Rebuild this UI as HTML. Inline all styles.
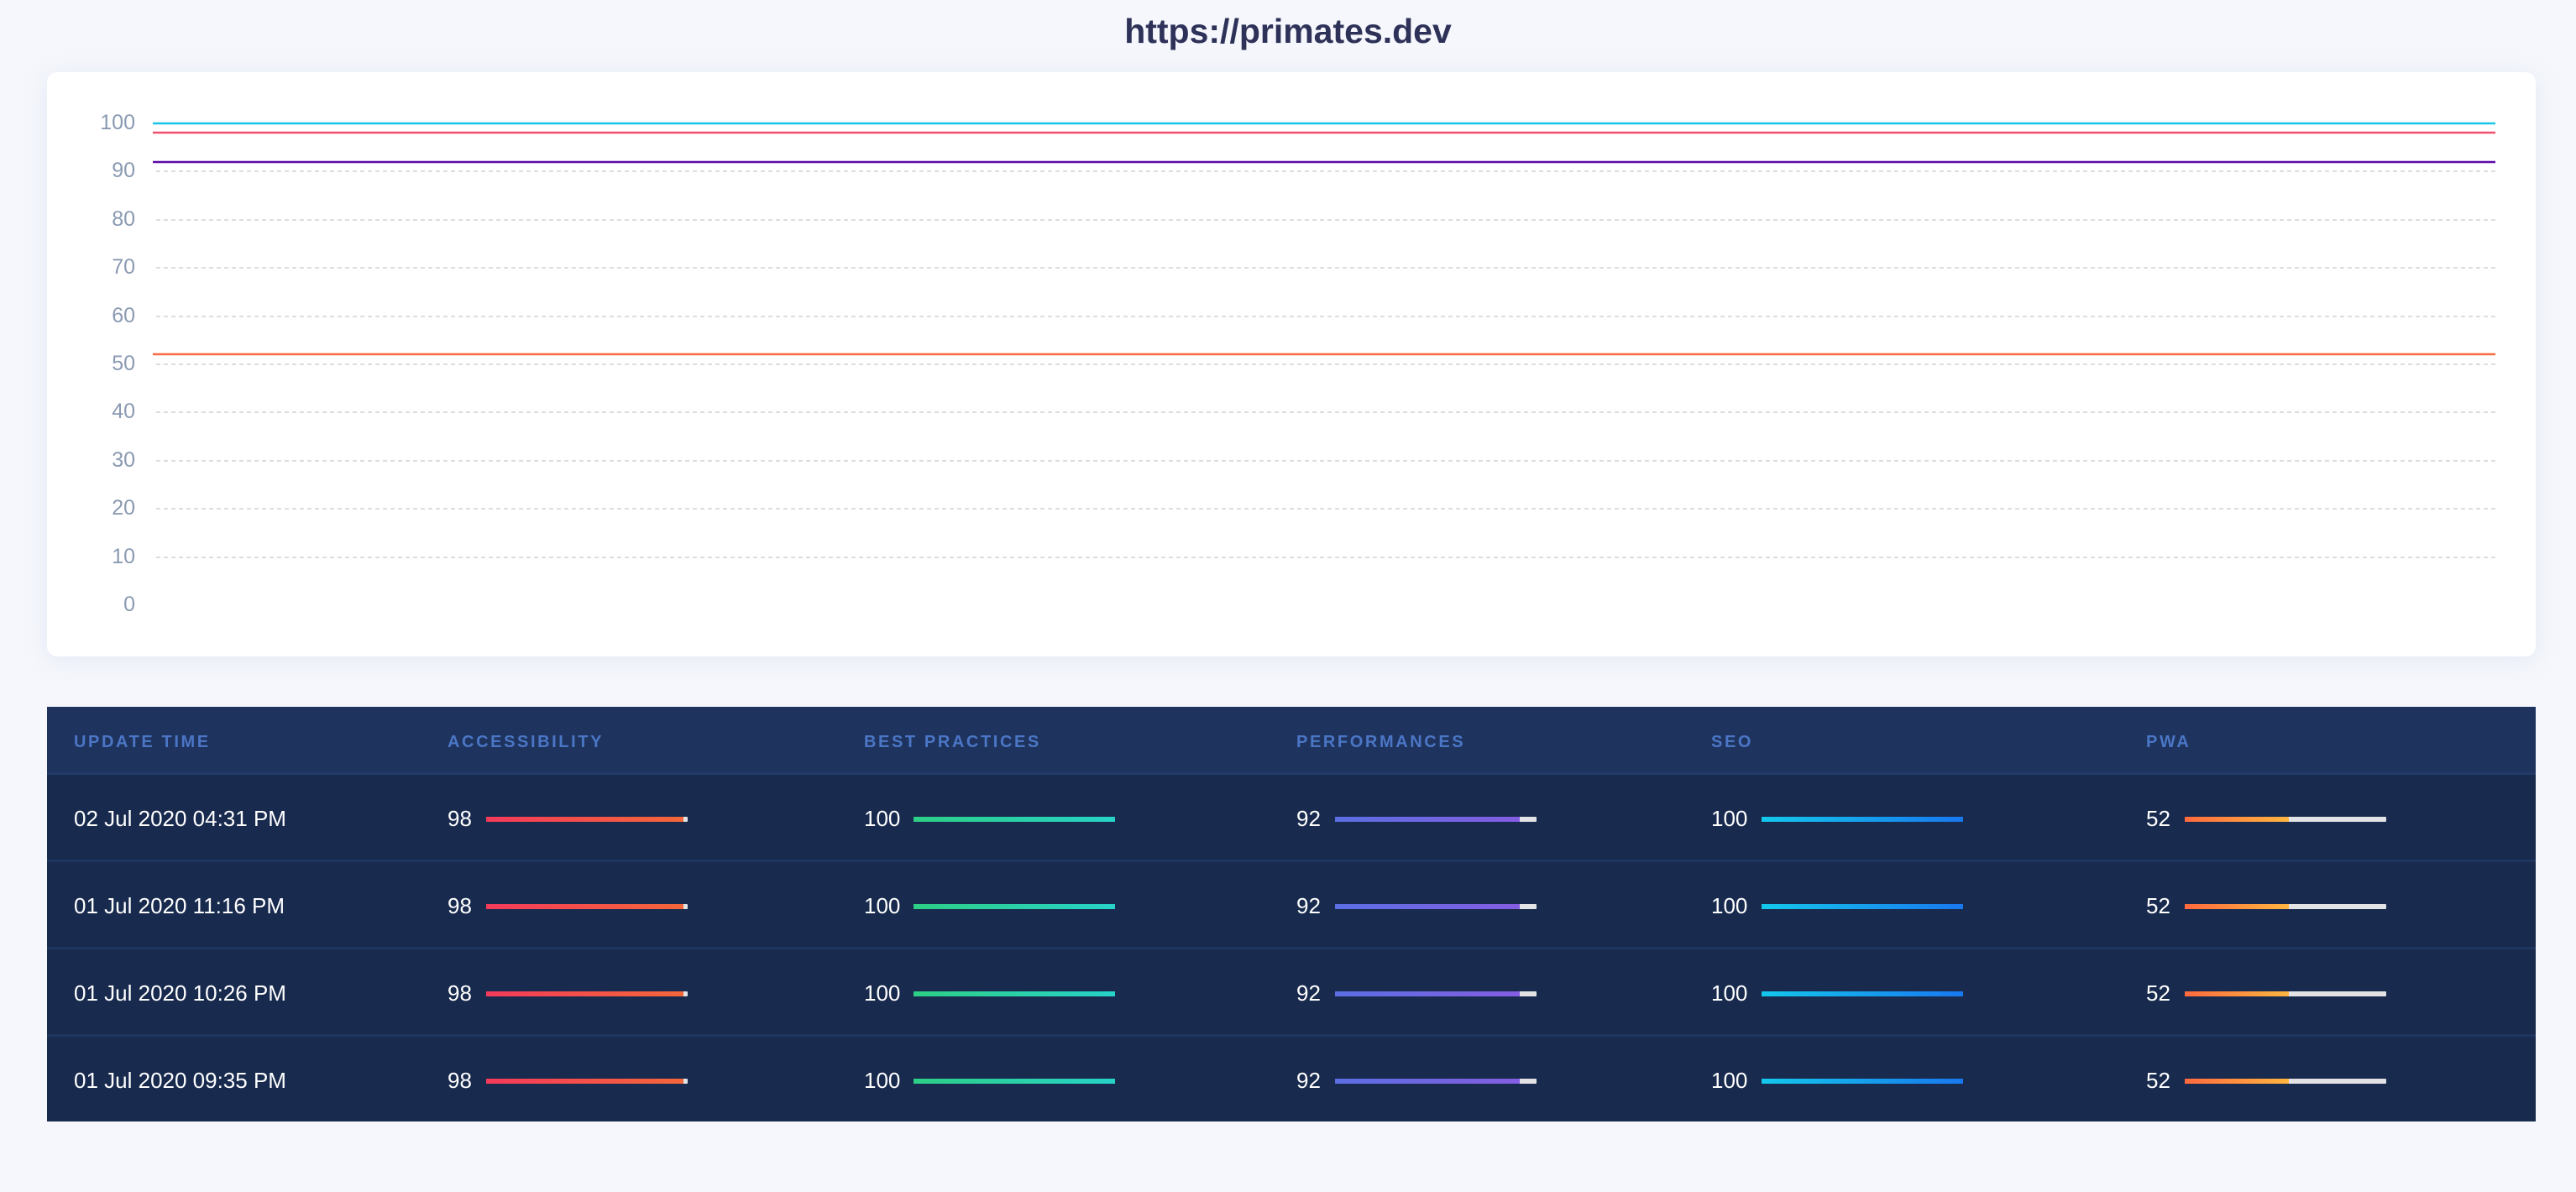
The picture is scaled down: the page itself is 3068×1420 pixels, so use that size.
<!DOCTYPE html>
<html><head><meta charset="utf-8"><style>
*{margin:0;padding:0;box-sizing:border-box}
body{width:3068px;height:1420px;background:#f5f7fc;font-family:"Liberation Sans",sans-serif;position:relative;overflow:hidden}
.title{position:absolute;top:14px;left:0;width:3068px;text-align:center;font-size:41px;font-weight:bold;color:#2e3158}
.card{position:absolute;left:56px;top:86px;width:2964px;height:696px;background:#fff;border-radius:12px;box-shadow:0 4px 30px rgba(160,170,210,0.18)}
svg{position:absolute;left:0;top:0}
.tbl{position:absolute;left:56px;top:842px;width:2964px}
.hd{height:81px;background:#1e335d;border-bottom:3px solid #213a68;position:relative}
.row{height:104px;background:#182a4e;border-bottom:3px solid #1f3660;position:relative}
.row:last-child{border-bottom:none;height:101px}
.h{position:absolute;top:31px;font-size:20px;letter-spacing:2.6px;color:#4b76c6;font-weight:bold}
.c{position:absolute;top:37px;font-size:26px;color:#fff}
.bar{position:absolute;top:50px;width:240px;height:6px;background:#e3e3e5;border-radius:1px}
.bar i{display:block;height:6px}
</style></head><body>
<div class="title">https://primates.dev</div>
<div class="card"></div>
<svg width="3068" height="800">
<g stroke="#dcdde0" stroke-width="2" stroke-dasharray="5,4">
<line x1="186" x2="2972" y1="204" y2="204"/><line x1="186" x2="2972" y1="262" y2="262"/><line x1="186" x2="2972" y1="319" y2="319"/><line x1="186" x2="2972" y1="377" y2="377"/><line x1="186" x2="2972" y1="434" y2="434"/><line x1="186" x2="2972" y1="491" y2="491"/><line x1="186" x2="2972" y1="549" y2="549"/><line x1="186" x2="2972" y1="606" y2="606"/><line x1="186" x2="2972" y1="664" y2="664"/>
</g>
<line x1="182" x2="2972" y1="147" y2="147" stroke="#16c6e6" stroke-width="2.5"/>
<line x1="182" x2="2972" y1="158" y2="158" stroke="#f1506e" stroke-width="2.5"/>
<line x1="182" x2="2972" y1="193" y2="193" stroke="#5a0aa8" stroke-width="2.5"/>
<line x1="182" x2="2972" y1="422" y2="422" stroke="#fd6a42" stroke-width="2.5"/>
<g font-family="Liberation Sans" font-size="25" fill="#8a9ab2" text-anchor="end">
<text x="161" y="154">100</text><text x="161" y="211">90</text><text x="161" y="269">80</text><text x="161" y="326">70</text><text x="161" y="384">60</text><text x="161" y="441">50</text><text x="161" y="498">40</text><text x="161" y="556">30</text><text x="161" y="613">20</text><text x="161" y="671">10</text><text x="161" y="728">0</text>
</g>
</svg>
<div class="tbl">
<div class="hd">
<div class="h" style="left:32px">UPDATE TIME</div><div class="h" style="left:477px">ACCESSIBILITY</div><div class="h" style="left:973px">BEST PRACTICES</div><div class="h" style="left:1488px">PERFORMANCES</div><div class="h" style="left:1982px">SEO</div><div class="h" style="left:2500px">PWA</div>
</div>
<div class="row"><div class="c" style="left:32px">02 Jul 2020 04:31 PM</div>
<div class="c" style="left:477px">98</div><div class="bar" style="left:523px"><i style="width:235px;background:linear-gradient(90deg,#f43a5a,#f4673a)"></i></div>
<div class="c" style="left:973px">100</div><div class="bar" style="left:1032px"><i style="width:240px;background:linear-gradient(90deg,#2dce85,#27d3c8)"></i></div>
<div class="c" style="left:1488px">92</div><div class="bar" style="left:1534px"><i style="width:220px;background:linear-gradient(90deg,#5b6fe2,#845de2)"></i></div>
<div class="c" style="left:1982px">100</div><div class="bar" style="left:2042px"><i style="width:240px;background:linear-gradient(90deg,#14c8ec,#1878ee)"></i></div>
<div class="c" style="left:2500px">52</div><div class="bar" style="left:2546px"><i style="width:124px;background:linear-gradient(90deg,#ff6a3e,#ffb640)"></i></div>
</div>
<div class="row"><div class="c" style="left:32px">01 Jul 2020 11:16 PM</div>
<div class="c" style="left:477px">98</div><div class="bar" style="left:523px"><i style="width:235px;background:linear-gradient(90deg,#f43a5a,#f4673a)"></i></div>
<div class="c" style="left:973px">100</div><div class="bar" style="left:1032px"><i style="width:240px;background:linear-gradient(90deg,#2dce85,#27d3c8)"></i></div>
<div class="c" style="left:1488px">92</div><div class="bar" style="left:1534px"><i style="width:220px;background:linear-gradient(90deg,#5b6fe2,#845de2)"></i></div>
<div class="c" style="left:1982px">100</div><div class="bar" style="left:2042px"><i style="width:240px;background:linear-gradient(90deg,#14c8ec,#1878ee)"></i></div>
<div class="c" style="left:2500px">52</div><div class="bar" style="left:2546px"><i style="width:124px;background:linear-gradient(90deg,#ff6a3e,#ffb640)"></i></div>
</div>
<div class="row"><div class="c" style="left:32px">01 Jul 2020 10:26 PM</div>
<div class="c" style="left:477px">98</div><div class="bar" style="left:523px"><i style="width:235px;background:linear-gradient(90deg,#f43a5a,#f4673a)"></i></div>
<div class="c" style="left:973px">100</div><div class="bar" style="left:1032px"><i style="width:240px;background:linear-gradient(90deg,#2dce85,#27d3c8)"></i></div>
<div class="c" style="left:1488px">92</div><div class="bar" style="left:1534px"><i style="width:220px;background:linear-gradient(90deg,#5b6fe2,#845de2)"></i></div>
<div class="c" style="left:1982px">100</div><div class="bar" style="left:2042px"><i style="width:240px;background:linear-gradient(90deg,#14c8ec,#1878ee)"></i></div>
<div class="c" style="left:2500px">52</div><div class="bar" style="left:2546px"><i style="width:124px;background:linear-gradient(90deg,#ff6a3e,#ffb640)"></i></div>
</div>
<div class="row"><div class="c" style="left:32px">01 Jul 2020 09:35 PM</div>
<div class="c" style="left:477px">98</div><div class="bar" style="left:523px"><i style="width:235px;background:linear-gradient(90deg,#f43a5a,#f4673a)"></i></div>
<div class="c" style="left:973px">100</div><div class="bar" style="left:1032px"><i style="width:240px;background:linear-gradient(90deg,#2dce85,#27d3c8)"></i></div>
<div class="c" style="left:1488px">92</div><div class="bar" style="left:1534px"><i style="width:220px;background:linear-gradient(90deg,#5b6fe2,#845de2)"></i></div>
<div class="c" style="left:1982px">100</div><div class="bar" style="left:2042px"><i style="width:240px;background:linear-gradient(90deg,#14c8ec,#1878ee)"></i></div>
<div class="c" style="left:2500px">52</div><div class="bar" style="left:2546px"><i style="width:124px;background:linear-gradient(90deg,#ff6a3e,#ffb640)"></i></div>
</div>
</div>
</body></html>
